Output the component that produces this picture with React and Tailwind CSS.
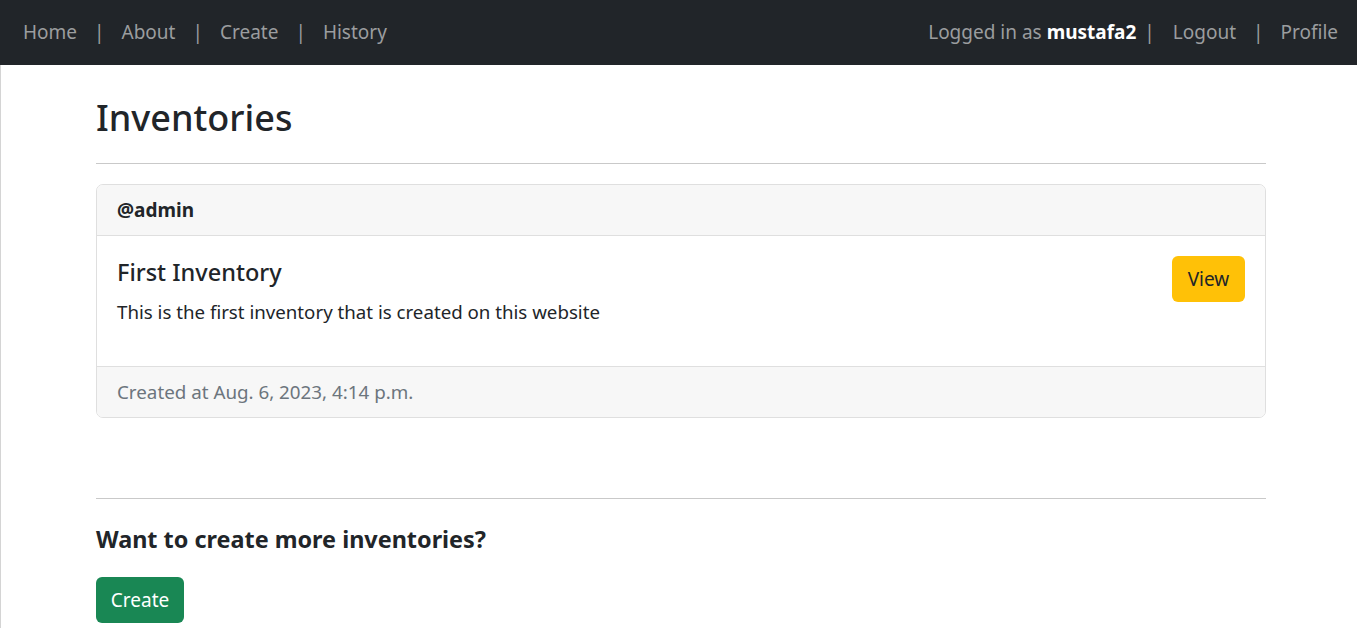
const navLinks = ["Home", "About", "Create", "History"];

function Sep() {
  return <span className="px-[17px] text-[#9b9d9f]">|</span>;
}

export default function App() {
  return (
    <div
      className="min-h-[628px] bg-white text-[#212529]"
      style={{ fontFamily: '"Noto Sans", "Open Sans", Arial, sans-serif' }}
    >
      <nav className="flex h-[65px] items-center justify-between bg-[#212529] pl-[23px] pr-[19px] text-[19px] text-[#9b9d9f]">
        <div className="flex items-center">
          {navLinks.map((link, i) => (
            <span key={link} className="flex items-center">
              {i > 0 && <Sep />}
              <a href="#" className="hover:text-white">
                {link}
              </a>
            </span>
          ))}
        </div>
        <div className="flex items-center">
          <span>
            Logged in as <b className="font-bold text-white">mustafa2</b>
          </span>
          <span className="pl-[8px] pr-[18px]">|</span>
          <a href="#">Logout</a>
          <Sep />
          <a href="#">Profile</a>
        </div>
      </nav>

      <div className="min-h-[563px] border-l border-[#d4d4d4]">
        <main className="ml-[95px] w-[1170px] pb-[5px]">
          <h1 className="pt-[31px] text-[36px] leading-[44px] font-medium">Inventories</h1>
          <hr className="mt-[23px] border-t border-[#c9c9c9]" />

          <div className="mt-[20px] overflow-hidden rounded-[7px] border border-[#dfdfdf]">
            <div className="flex h-[51px] items-center border-b border-[#dfdfdf] bg-[#f7f7f7] px-[20px] text-[19px] font-bold">
              @admin
            </div>
            <div className="flex h-[130px] justify-between p-[20px]">
              <div>
                <h5 className="text-[23.5px] leading-[32px] font-medium">First Inventory</h5>
                <p className="mt-[10px] text-[18.7px] leading-[28px]">
                  This is the first inventory that is created on this website
                </p>
              </div>
              <button className="h-[46px] w-[73px] rounded-[6px] bg-[#ffc107] text-[19px] text-[#212529]">
                View
              </button>
            </div>
            <div className="flex h-[51px] items-center border-t border-[#dfdfdf] bg-[#f7f7f7] px-[20px] text-[18.8px] text-[#6c757d]">
              Created at Aug. 6, 2023, 4:14 p.m.
            </div>
          </div>

          <hr className="mt-[80px] border-t border-[#c9c9c9]" />
          <h4 className="mt-[24px] text-[23.4px] leading-[32px] font-bold">
            Want to create more inventories?
          </h4>
          <button className="mt-[22px] h-[46px] w-[88px] rounded-[6px] bg-[#198754] text-[19px] text-white">
            Create
          </button>
        </main>
      </div>
    </div>
  );
}
